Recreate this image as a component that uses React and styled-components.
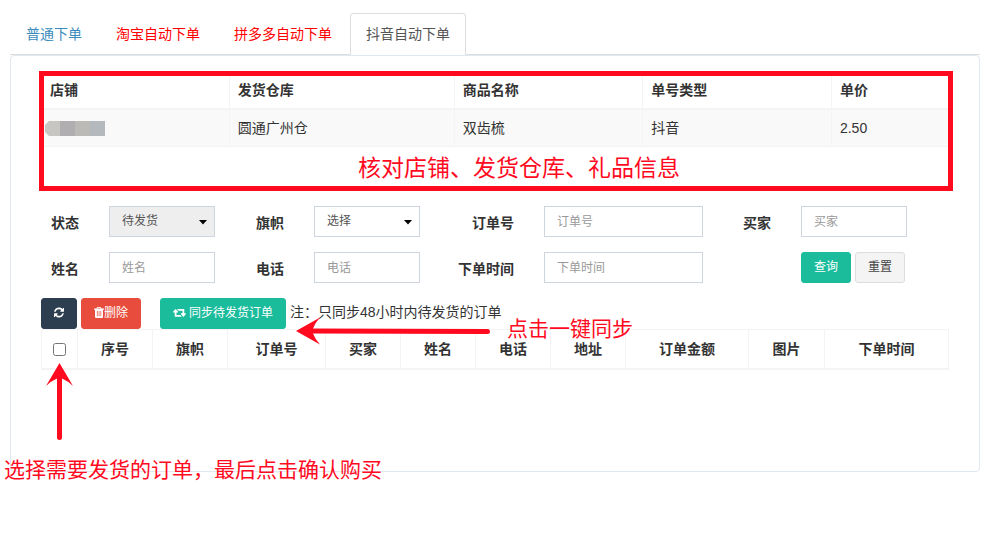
import React from 'react';
import styled, { createGlobalStyle } from 'styled-components';

const GlobalStyle = createGlobalStyle`
  * {
    box-sizing: border-box;
  }
  body {
    margin: 0;
    background: #fff;
    color: #333;
    font-family: 'Liberation Sans', 'Noto Sans CJK SC', sans-serif;
    font-size: 14px;
    line-height: 20px;
  }
  input, select, button {
    font-family: inherit;
  }
`;

const Page = styled.main`
  padding: 13px 9px 20px 10px;
`;

const Tabs = styled.nav`
  display: flex;
  gap: 2px;
  border-bottom: 1px solid #ddd;
`;

const Tab = styled.a`
  padding: 10px 15px;
  margin-bottom: -1px;
  border: 1px solid transparent;
  border-radius: 4px 4px 0 0;
  color: ${({ $tone }) => $tone};
  text-decoration: none;
  &[aria-current] {
    border-color: #ddd;
    border-bottom-color: #fff;
    background: #fff;
  }
`;

const Panel = styled.section`
  padding: 15px 30px 101px;
  border: 1px solid #e1e8f0;
  border-radius: 4px;
`;

const Summary = styled.div`
  position: relative;
  margin-bottom: 15px;
`;

const Frame = styled.div`
  position: absolute;
  inset: 0 -4px 0 -2px;
  border: 5px solid #ff0a1e;
  pointer-events: none;
`;

const Table = styled.table`
  width: 100%;
  table-layout: fixed;
  border-spacing: 0;
  border-top: 1px solid #f4f4f4;
  border-left: 1px solid #f4f4f4;
  text-align: ${({ $align }) => $align || 'left'};
  th,
  td {
    padding: 8px;
    border-right: 1px solid #f4f4f4;
    text-align: inherit;
  }
  th {
    border-bottom: 2px solid #f4f4f4;
    font-weight: bold;
  }
  td {
    border-bottom: 1px solid #f4f4f4;
    background: #f9f9f9;
  }
`;

const OrderTable = styled(Table)`
  th {
    padding: 9px 0;
  }
`;

const Masked = styled.svg`
  display: block;
  margin-left: -5px;
`;

const Callout = styled.p`
  margin: 0;
  color: #ff0a1e;
  font-size: ${({ $size }) => $size || 21}px;
  line-height: 30px;
  white-space: nowrap;
`;

const SummaryCallout = styled(Callout)`
  padding: 6px 0 8px 48px;
  text-align: center;
`;

const Filters = styled.form`
  display: grid;
  grid-template-columns: 39fr 106fr 41fr 106fr 66fr 159fr 40fr 106fr 13fr;
  gap: 15px 29px;
  margin-bottom: 15px;
`;

const Label = styled.label`
  grid-column: ${({ $col }) => $col};
  padding: 7px 1px 0 0;
  font-weight: bold;
  text-align: right;
  white-space: nowrap;
`;

const Input = styled.input`
  width: 100%;
  min-width: 0;
  height: 31px;
  padding: 5px 12px;
  border: 1px solid #cfd5de;
  background: #fff;
  color: #555;
  font-size: 12px;
  &::placeholder {
    color: #999;
    opacity: 1;
  }
`;

const SelectBox = styled.div`
  position: relative;
  svg {
    position: absolute;
    top: 14px;
    right: 8px;
    pointer-events: none;
  }
`;

const Select = styled.select`
  display: block;
  width: 100%;
  height: 31px;
  padding: 0 12px 2px;
  appearance: none;
  border: 1px solid #cfd5de;
  border-radius: 0;
  background: ${({ $muted }) => ($muted ? '#eee' : '#fff')};
  color: #555;
  font-size: 12px;
`;

const Actions = styled.div`
  display: flex;
  gap: 4px;
`;

const Toolbar = styled.div`
  position: relative;
  z-index: 1;
  display: flex;
  align-items: center;
  gap: 4px;
`;

const palette = {
  primary: '#1abc9c',
  dark: '#2c3e50',
  danger: '#e74c3c',
};

const Button = styled.button`
  display: flex;
  align-items: center;
  height: 31px;
  padding: 0 12px 2px;
  border: 1px solid ${({ $kind }) => palette[$kind] || '#ddd'};
  border-radius: 3px;
  background: ${({ $kind }) => palette[$kind] || '#f4f4f4'};
  color: ${({ $kind }) => ($kind ? '#fff' : '#444')};
  font-size: 12px;
  line-height: 18px;
  white-space: nowrap;
  cursor: pointer;
`;

const SyncButton = styled(Button)`
  gap: 3px;
  margin-left: 15px;
`;

const Note = styled.span`
  padding-bottom: 3px;
`;

const Check = styled.input`
  display: block;
  width: 13px;
  height: 13px;
  margin: 0 auto;
`;

const SyncPointer = styled.div`
  position: absolute;
  top: 16px;
  left: 255px;
  display: flex;
  gap: 15px;
  pointer-events: none;
`;

const ArrowLeft = styled.svg`
  flex: none;
  margin-top: 3px;
`;

const Orders = styled.div`
  position: relative;
`;

const SelectPointer = styled.div`
  position: absolute;
  top: 34px;
  left: -37px;
  pointer-events: none;
  svg {
    display: block;
    margin: 0 0 15px 42px;
  }
`;

const tabs = [
  { text: '普通下单', tone: '#3c8dbc' },
  { text: '淘宝自动下单', tone: '#f00' },
  { text: '拼多多自动下单', tone: '#f00' },
  { text: '抖音自动下单', tone: '#555', active: true },
];

const summaryCols = [
  { name: '店铺', width: '20.7%' },
  { name: '发货仓库', width: '24.8%' },
  { name: '商品名称', width: '20.8%' },
  { name: '单号类型', width: '20.8%' },
  { name: '单价', width: '12.9%' },
];

const orderCols = [
  { name: '序号', width: 75 },
  { name: '旗帜', width: 75 },
  { name: '订单号', width: 98 },
  { name: '买家', width: 75 },
  { name: '姓名', width: 75 },
  { name: '电话', width: 75 },
  { name: '地址', width: 75 },
  { name: '订单金额', width: 123 },
  { name: '图片', width: 76 },
  { name: '下单时间', width: 124 },
];

const Caret = () => (
  <svg width="8" height="5" viewBox="0 0 8 5" aria-hidden="true">
    <path d="M0 0h8L4 4.5z" fill="#000" />
  </svg>
);

const RefreshIcon = () => (
  <svg width="10" height="11" viewBox="0 0 1536 1536" fill="currentColor" aria-hidden="true">
    <path d="M1511 928q0 5-1 7-64 268-268 434.500t-478 166.500q-146 0-282.500-55t-243.500-157l-129 129q-19 19-45 19t-45-19-19-45v-448q0-26 19-45t45-19h448q26 0 45 19t19 45-19 45l-137 137q71 66 161 102t187 36q134 0 250-65t186-179q11-17 53-117 8-23 30-23h192q13 0 22.500 9.500t9.500 22.500zm25-800v448q0 26-19 45t-45 19h-448q-26 0-45-19t-19-45 19-45l138-138q-148-137-349-137-134 0-250 65t-186 179q-11 17-53 117-8 23-30 23h-199q-13 0-22.500-9.500t-9.500-22.500v-7q65-268 270-434.500t480-166.500q146 0 284 55.500t245 156.500l130-129q19-19 45-19t45 19 19 45z" />
  </svg>
);

const TrashIcon = () => (
  <svg width="10" height="11" viewBox="0 0 10 11" aria-hidden="true">
    <path
      fill="currentColor"
      fillRule="evenodd"
      d="M3.300 0h3.400l.8 1.500H10v1.200H9v7.100Q9 11 8 11H2Q1 11 1 9.800V2.700H0V1.500h2.500zM3.800 .8l-.3.700h3l-.3-.700zM2.900 4v5.300h.7V4zM4.700 4v5.300h.7V4zM6.500 4v5.300h.7V4z"
    />
  </svg>
);

const RetweetIcon = () => (
  <svg width="13" height="9" viewBox="0 256 1920 1280" fill="currentColor" aria-hidden="true">
    <path d="M1280 1504q0 13-9.500 22.500t-22.500 9.500h-960q-8 0-13.500-2t-9-7-5.500-8-3-11.500-1-11.500v-600h-192q-26 0-45-19t-19-45q0-24 15-41l320-384q19-22 49-22t49 22l320 384q15 17 15 41 0 26-19 45t-45 19h-192v384h576q16 0 25 11l160 192q7 11 7 21zm640-416q0 24-15 41l-320 384q-20 23-49 23t-49-23l-320-384q-15-17-15-41 0-26 19-45t45-19h192v-384h-576q-16 0-25-12l-160-192q-7-9-7-20 0-13 9.500-22.500t22.500-9.500h960q8 0 13.500 2t9 7 5.500 8 3 11.500 1 11.500v600h192q26 0 45 19t19 45z" />
  </svg>
);

const App = () => {
  return (
    <Page>
      <GlobalStyle />
      <Tabs>
        {tabs.map(({ text, tone, active }) => (
          <Tab key={text} href="#" $tone={tone} aria-current={active ? 'page' : undefined}>
            {text}
          </Tab>
        ))}
      </Tabs>
      <Panel>
        <Summary>
          <Table>
            <colgroup>
              {summaryCols.map(({ name, width }) => (
                <col key={name} width={width} />
              ))}
            </colgroup>
            <thead>
              <tr>
                {summaryCols.map(({ name }) => (
                  <th key={name}>{name}</th>
                ))}
              </tr>
            </thead>
            <tbody>
              <tr>
                <td>
                  <Masked width="60" height="15" viewBox="0 0 60 15" aria-hidden="true">
                    <path d="M4 0h11v15H4L0 11V4z" fill="#c7c6c3" />
                    <path d="M15 0h15v15H15z" fill="#b0aeb1" />
                    <path d="M30 0h15v15H30z" fill="#bbbab6" />
                    <path d="M45 0h15v15H45z" fill="#b4b9be" />
                  </Masked>
                </td>
                <td>圆通广州仓</td>
                <td>双齿梳</td>
                <td>抖音</td>
                <td>2.50</td>
              </tr>
            </tbody>
          </Table>
          <SummaryCallout $size={23}>核对店铺、发货仓库、礼品信息</SummaryCallout>
          <Frame />
        </Summary>

        <Filters onSubmit={(e) => e.preventDefault()}>
          <Label htmlFor="status">状态</Label>
          <SelectBox>
            <Select id="status" $muted>
              <option>待发货</option>
            </Select>
            <Caret />
          </SelectBox>
          <Label htmlFor="flag">旗帜</Label>
          <SelectBox>
            <Select id="flag">
              <option>选择</option>
            </Select>
            <Caret />
          </SelectBox>
          <Label htmlFor="orderNo">订单号</Label>
          <Input id="orderNo" placeholder="订单号" />
          <Label htmlFor="buyer">买家</Label>
          <Input id="buyer" placeholder="买家" />

          <Label htmlFor="name" $col={1}>姓名</Label>
          <Input id="name" placeholder="姓名" />
          <Label htmlFor="phone">电话</Label>
          <Input id="phone" placeholder="电话" />
          <Label htmlFor="orderTime">下单时间</Label>
          <Input id="orderTime" placeholder="下单时间" />
          <span />
          <Actions>
            <Button type="submit" $kind="primary">查询</Button>
            <Button type="reset">重置</Button>
          </Actions>
        </Filters>

        <Toolbar>
          <Button type="button" $kind="dark" aria-label="刷新">
            <RefreshIcon />
          </Button>
          <Button type="button" $kind="danger">
            <TrashIcon />
            删除
          </Button>
          <SyncButton type="button" $kind="primary">
            <RetweetIcon />
            同步待发货订单
          </SyncButton>
          <Note>注：只同步48小时内待发货的订单</Note>
          <SyncPointer>
            <ArrowLeft width="196" height="28" viewBox="0 0 196 28" aria-hidden="true">
              <path
                d="M0 14L24 0.500Q19 6 17 11.500L191.500 12a2.500 2.500 0 0 1 0 5L17 16.500Q19 22 24 27.500z"
                fill="#ff0a1e"
              />
            </ArrowLeft>
            <Callout>点击一键同步</Callout>
          </SyncPointer>
        </Toolbar>

        <Orders>
          <OrderTable $align="center">
            <colgroup>
              <col width="36" />
              {orderCols.map(({ name, width }) => (
                <col key={name} width={width} />
              ))}
            </colgroup>
            <thead>
              <tr>
                <th>
                  <Check type="checkbox" aria-label="全选" />
                </th>
                {orderCols.map(({ name }) => (
                  <th key={name}>{name}</th>
                ))}
              </tr>
            </thead>
          </OrderTable>
          <SelectPointer>
            <svg width="27" height="77" viewBox="0 0 27 77" aria-hidden="true">
              <path
                d="M13.500 0L27 23Q22 18 16 15.500V74.500a2.500 2.500 0 0 1-5 0V15.500Q5 18 0 23z"
                fill="#ff0a1e"
              />
            </svg>
            <Callout>选择需要发货的订单，最后点击确认购买</Callout>
          </SelectPointer>
        </Orders>
      </Panel>
    </Page>
  );
};

export default App;
